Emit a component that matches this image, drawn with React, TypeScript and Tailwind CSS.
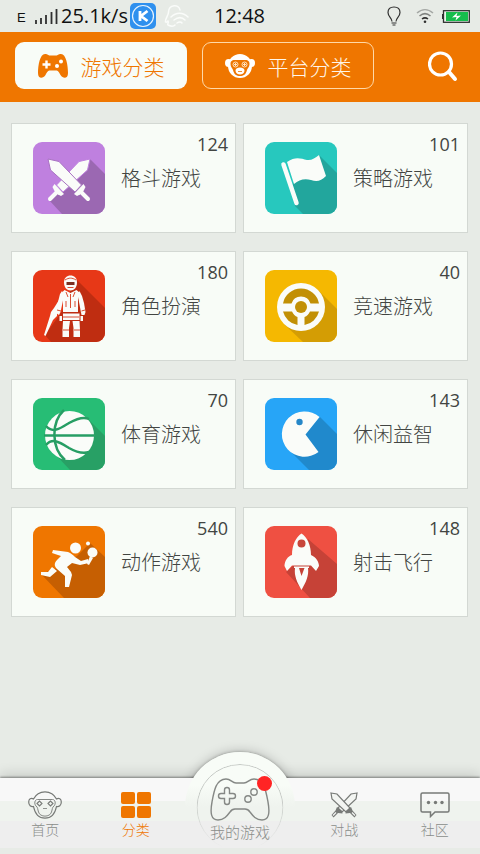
import type { ReactNode } from "react";

const hanzi = "font-['Noto_Sans_CJK_SC',sans-serif] font-light";

/* ---------- category artwork, drawn on a 72 x 72 tile ---------- */

function Sword({ edge }: { edge: string }) {
  return (
    <g>
      <path d="M15 17L26 19.5L48.5 43L42 50L17.5 28Z" fill="#fafcf9" stroke={edge} strokeWidth="1" />
      <path d="M48 50L55 57" stroke="#fafcf9" strokeWidth="4" strokeLinecap="round" />
      <path d="M50.5 42L52.5 45L50.5 49L47 52.5L44 54L41 52Z" fill="#fafcf9" />
    </g>
  );
}

const FightArt = (
  <>
    <path d="M57 17L72 32V72H29L15 57L36 36Z" fill="#9b68b2" />
    <g transform="matrix(-1 0 0 1 72 0)">
      <Sword edge="#bf80df" />
    </g>
    <Sword edge="#a873c2" />
  </>
);

const FlagArt = (
  <>
    <path d="M54 13L72 31V72H38L30 64L28 42Z" fill="#22a69d" />
    <path d="M18.5 22.5L31.5 61" stroke="#fafcf9" strokeWidth="4.5" strokeLinecap="round" />
    <path d="M22 20C31 14 36 17 42 18C47 18.5 50 16 54 13L61 34C56 39 52 40 46 38C39 36 34 38 29 42Z" fill="#fafcf9" />
  </>
);

const SoldierArt = (
  <>
    <path d="M42 8L72 38V72H18L12 65L30 40Z" fill="#bf2d11" />
    <path d="M26 30L21 38L18 42L17 46L11 65L12.5 66L20 50L24 46V42L28 34Z" fill="#fafcf9" />
    <g fill="#fafcf9">
      <path d="M31 12.5C31 8 34 5.5 37.500 5.500S44 8 44 12.500C44 17.500 41 20.500 37.500 20.500S31 17.500 31 12.500Z" />
      <path d="M31.500 20L37.500 23L43.500 20L47 23L45 30V42H30V30L28.500 23Z" />
      <path d="M29 21L31 25L29.500 33L27.500 42L26 45L23 43L24.500 34L27 24Z" />
      <path d="M46.500 21L49 26L51 33L52.500 42L51.500 45L48.500 45L47.500 40L46 32L45 25Z" />
      <path d="M30 43.500H46.500L46.500 50L38.500 50L30 50Z" />
      <path d="M30 51H37L36 58V67H29.500V60Z" />
      <path d="M39.500 51H46.500L47 60V67H40.500V58Z" />
      <path d="M26.500 46H29V51H26.500ZM47.500 46H50V51H47.500Z" />
    </g>
    <g stroke="#d73a1b" fill="none" strokeWidth=".9">
      <path d="M32 10C36 7.500 39 7.500 43 10M34.500 17.500H40.500" />
      <path d="M37.500 24V38M33 22L35 27M42 22L40 27M33 31V37M42 31V37M30 47H46" />
      <path d="M24 40L28 41M48.500 41L52 40M30 60H36M41 60H47" />
    </g>
    <path d="M33.500 12H41.500V15H33.500Z" fill="#7b3022" />
  </>
);

const WheelArt = (
  <>
    <path d="M53 20L72 39V72H38L19 54Z" fill="#d49d04" />
    <circle cx="36" cy="37" r="24" fill="#fafcf9" />
    <path d="M18 33.500A18.300 18.300 0 0 1 54 33.500H45.500A10 10 0 0 0 26.500 33.500Z" fill="#c29005" />
    <path d="M18 41.500H27C28.500 44.500 30 46 32.500 47V55A18.300 18.300 0 0 1 18 41.500Z" fill="#c29005" />
    <path d="M54 41.500H45C43.500 44.500 42 46 39.500 47V55A18.300 18.300 0 0 0 54 41.500Z" fill="#c29005" />
    <circle cx="36" cy="37" r="6" fill="#c29005" />
  </>
);

const BallArt = (
  <>
    <path d="M54 20L72 38V72H37L22 56Z" fill="#28a065" />
    <circle cx="36.500" cy="37.500" r="24.500" fill="#fafcf9" />
    <g fill="none" stroke="#279e64" strokeWidth="2.500">
      <path d="M11 37.500H61" />
      <path d="M31 12C18 24 18 50 32 62" />
      <path d="M13 28C20 36 28 30 36 25C43 21 50 18 56 21" />
      <path d="M13 47C20 39 28 45 36 50C43 54 50 56 56 54" />
    </g>
  </>
);

const PacArt = (
  <>
    <path d="M55 19L72 36V72H44L25 53L40 36Z" fill="#2089cc" />
    <path d="M54.500 19A22.700 22.700 0 1 0 53.500 54L40.500 36.500Z" fill="#fafcf9" />
    <circle cx="34.500" cy="24" r="3.200" fill="#2587c8" />
  </>
);

const RunnerArt = (
  <>
    <path d="M57 17L72 31V72H31L8 48L24 42L44 30Z" fill="#c65f02" />
    <g fill="#fafcf9">
      <circle cx="42.500" cy="22" r="5.500" />
      <circle cx="55" cy="17.500" r="2" />
      <circle cx="59.500" cy="26.500" r="5" />
      <path d="M57 30L60 32L56 39L54 38Z" />
      <path d="M20 24L35 26C38 27 40 29 42 31L48 35L55 33L56 37L47 39L39 37L34 41L38 46L39 49L36 61H32L32 50L24 43C21 40 21 37 24 34L28 30L19 27Z" />
      <path d="M19 41L24 45L17 51L8 49V46L15 46Z" />
    </g>
  </>
);

const RocketArt = (
  <>
    <path d="M43 13L72 38V72H45L21 46L30 38Z" fill="#c64237" />
    <path d="M36.500 7.500C42 11 46 19 46 29C51 31 54 36 54 40L51 45L46 39.500H27L22 45L19.500 40C19.500 35 23 30 27 29C27 19 31 11 36.500 7.500Z" fill="#fafcf9" />
    <path d="M29 41.200H44" stroke="#fafcf9" strokeWidth="1.500" />
    <path d="M30 42H34L36.500 50L39.500 42H43C44 50 41 56 36.500 64C32 56 29 50 30 42Z" fill="#fafcf9" />
    <circle cx="36.500" cy="17.500" r="4" fill="#c8463b" />
  </>
);

type Category = { name: string; count: number; tile: string; art: ReactNode };

const categories: Category[] = [
  { name: "格斗游戏", count: 124, tile: "bg-[#bf80df]", art: FightArt },
  { name: "策略游戏", count: 101, tile: "bg-[#27c8be]", art: FlagArt },
  { name: "角色扮演", count: 180, tile: "bg-[#e73817]", art: SoldierArt },
  { name: "竞速游戏", count: 40, tile: "bg-[#f5b801]", art: WheelArt },
  { name: "体育游戏", count: 70, tile: "bg-[#27bd75]", art: BallArt },
  { name: "休闲益智", count: 143, tile: "bg-[#27a5f7]", art: PacArt },
  { name: "动作游戏", count: 540, tile: "bg-[#ef7600]", art: RunnerArt },
  { name: "射击飞行", count: 148, tile: "bg-[#ef5042]", art: RocketArt },
];

function CategoryCard({ name, count, tile, art }: Category) {
  return (
    <button type="button" className="flex h-[110px] items-center gap-4 border border-[#d3d8d3] bg-[#f8fcf7] pl-[21px] text-left">
      <span className={`size-[72px] shrink-0 overflow-hidden rounded-[9px] ${tile}`}>
        <svg viewBox="0 0 72 72" className="size-full" fill="none" aria-hidden="true">
          {art}
        </svg>
      </span>
      <span className="flex min-w-0 flex-1 flex-col gap-2 self-stretch pt-2">
        <span className="pr-[7px] text-right font-['Open_Sans',sans-serif] text-[18px] leading-6 text-[#424542]">{count}</span>
        <span className={`${hanzi} text-[20px] leading-7 whitespace-nowrap text-[#424542]`}>{name}</span>
      </span>
    </button>
  );
}

/* ---------- status bar ---------- */

function StatusBar() {
  return (
    <div className="flex h-8 items-center bg-[#e7ebe6] font-['Open_Sans',sans-serif] text-[20px] leading-8 text-[#101010]">
      <div className="flex flex-1 items-center pl-[17px]">
        <span className="w-[18px] pt-1 font-['Liberation_Sans',sans-serif] text-[13px]">E</span>
        <svg viewBox="0 0 24 16" className="mr-[2px] h-4 w-6" stroke="#303030" strokeWidth="1.800" aria-hidden="true">
          <path d="M1 16V12M6 16V10M11 16V7M16.500 16V4M21.500 16V1" />
        </svg>
        <span className="w-[69px] whitespace-nowrap">25.1k/s</span>
        <svg viewBox="0 0 26 26" className="size-[26px]" fill="none" aria-hidden="true">
          <rect width="26" height="26" rx="5" fill="#2f90ee" />
          <circle cx="13" cy="13" r="10.500" stroke="#e8f3fd" strokeWidth="1.200" />
          <path d="M10 8V18M17.500 8L11 13L17.500 18" stroke="#fff" strokeWidth="2.800" />
        </svg>
        <svg viewBox="0 0 26 24" className="ml-2 h-6 w-[26px]" fill="none" stroke="#fafcfa" strokeWidth="1.500" strokeLinecap="round" aria-hidden="true">
          <path d="M16 6C15 0 5 0 4.500 8C4.500 12 1 14 1.500 18C3 19 3 17 4 17C5 19 3 20 4 21C8 23 10 22 11 21" />
          <path d="M7 13C12 8 19 8 24 13M10 16C14 13 18 13 21 16M13 19C15 17.500 17 17.500 18 19" />
        </svg>
      </div>
      <span className="pr-2">12:48</span>
      <div className="flex flex-1 items-center justify-end gap-2 pr-[10px]">
        <svg viewBox="0 0 14 20" className="mr-[7px] h-5 w-[14px]" fill="none" stroke="#303030" strokeWidth="1.200" aria-hidden="true">
          <path d="M5 15.500C5 12 1 10.500 1 6.500C1 3 3.500 1 7 1S13 3 13 6.500C13 10.500 9 12 9 15.500M4.500 17H9.500M5.500 19H8.500" />
        </svg>
        <svg viewBox="0 0 18 16" className="h-4 w-[18px]" fill="none" strokeWidth="1.500" aria-hidden="true">
          <path d="M1 5C6 .5 12 .5 17 5" stroke="#a5a8a5" />
          <path d="M3.500 8C7 5 11 5 14.500 8" stroke="#808380" />
          <path d="M6 11C8 9.500 10 9.500 12 11" stroke="#303030" />
          <circle cx="9" cy="13.800" r="1.300" fill="#303030" />
        </svg>
        <svg viewBox="0 0 28 13" className="h-[13px] w-7" aria-hidden="true">
          <rect x="1.500" y=".7" width="25.800" height="11.600" fill="#e9f5ea" stroke="#303030" strokeWidth="1.300" />
          <path d="M0 4H1.500V9H0Z" fill="#303030" />
          <rect x="4" y="2" width="22" height="9" fill="#17bd4c" />
          <path d="M15.500 2.500L10 7.500L14.500 7L13.500 10.500L19 5.500L14.500 6Z" fill="#fff" />
        </svg>
      </div>
    </div>
  );
}

/* ---------- header ---------- */

function PadSolid() {
  return (
    <svg viewBox="0 0 30 24" className="h-6 w-[30px]" aria-hidden="true">
      <path d="M7 0C10 0 10 1.500 12 1.500H18C20 1.500 20 0 23 0C28 0 30 11 30 19C30 25 25 25 22.500 21C20.500 17.500 20 16.500 18 16.500H12C10 16.500 9.500 17.500 7.500 21C5 25 0 25 0 19C0 11 2 0 7 0Z" fill="#ef7600" />
      <path d="M8.500 6.500V14.500M4.500 10.500H12.500" stroke="#fff" strokeWidth="2.400" />
      <circle cx="23" cy="7.500" r="2" fill="#fff" />
      <circle cx="19" cy="12" r="2" fill="#fff" />
    </svg>
  );
}

function MonkeySolid() {
  return (
    <svg viewBox="0 0 30 24" className="h-6 w-[30px]" fill="none" aria-hidden="true">
      <ellipse cx="3.500" cy="9" rx="3.500" ry="4" fill="#fff" />
      <ellipse cx="26.500" cy="9" rx="3.500" ry="4" fill="#fff" />
      <ellipse cx="15" cy="12" rx="12" ry="12" fill="#fff" />
      <path d="M5.500 10C5.500 5.500 9 6 12 6H18C21 6 24.500 5.500 24.500 10C24.500 13 22.500 14 22 16C21 20.500 18.500 22 15 22S9 20.500 8 16C7.500 14 5.500 13 5.500 10Z" fill="#ef7600" />
      <path d="M11.500 14.500C13.500 13 16.500 13 18.500 14.500C20.500 16 19.500 20.500 15 20.500S9.500 16 11.500 14.500Z" fill="#fff" />
      <g stroke="#ffe3c2" strokeWidth="1">
        <circle cx="10.500" cy="10.500" r="2.500" />
        <circle cx="19.500" cy="10.500" r="2.500" />
        <path d="M10.500 9V12M9 10.500H12M19.500 9V12M18 10.500H21" />
      </g>
      <path d="M13 17.500H17" stroke="#ef7600" strokeWidth=".8" />
    </svg>
  );
}

function Header() {
  return (
    <header className="flex h-[70px] items-center bg-[#ef7600] pr-[22px] pb-[5px] pl-[15px]">
      <nav className={`flex gap-[15px] pt-[2px] text-[21px] leading-8 ${hanzi}`}>
        <button type="button" aria-pressed="true" className="flex h-[47px] w-[172px] items-center justify-center gap-[13px] rounded-[9px] bg-[#f8fcf7] whitespace-nowrap text-[#ef7600]">
          <PadSolid />
          游戏分类
        </button>
        <button type="button" aria-pressed="false" className="flex h-[47px] w-[172px] items-center justify-center gap-[13px] rounded-[9px] border border-[#ffd9a8] whitespace-nowrap text-[#fff6ea]">
          <MonkeySolid />
          平台分类
        </button>
      </nav>
      <button type="button" aria-label="搜索" className="ml-auto pt-[3px]">
        <svg viewBox="0 0 30 31" className="h-[31px] w-[30px]" fill="none" stroke="#fff" strokeLinecap="round" aria-hidden="true">
          <circle cx="12.500" cy="13" r="11" strokeWidth="3.200" />
          <path d="M21 21L27 28" strokeWidth="4" />
        </svg>
      </button>
    </header>
  );
}

/* ---------- bottom navigation ---------- */

function MonkeyLine() {
  return (
    <svg viewBox="0 0 34 28" className="h-7 w-[34px]" fill="none" stroke="#777a77" strokeWidth="1.200" aria-hidden="true">
      <path d="M5.500 8C8 3 12 .8 17 .8S26 3 28.500 8C31 6.500 33.300 8 33.300 11C33.300 14.500 31 16 28.500 15.500C27 23 23 27.200 17 27.200S7 23 5.500 15.500C3 16 .7 14.500 .7 11C.7 8 3 6.500 5.500 8Z" />
      <path d="M9.500 8.500H24.500C27.500 8.500 28 13 26 15C24 16.500 24.500 18 23.500 21C22 26.500 12 26.500 10.500 21C9.500 18 10 16.500 8 15C6 13 6.500 8.500 9.500 8.500Z" strokeWidth=".9" />
      <path d="M9 12.500L11.500 10L14 12.500L11.500 15ZM20 12.500L22.500 10L25 12.500L22.500 15Z" strokeWidth="1.100" />
      <path d="M15 17.500H19" strokeWidth=".8" />
    </svg>
  );
}

function GridSolid() {
  return (
    <svg viewBox="0 0 30 26" className="h-[26px] w-[30px]" fill="#ef7600" aria-hidden="true">
      <rect width="14" height="12" rx="2" />
      <rect x="16" width="14" height="12" rx="2" />
      <rect y="14" width="14" height="12" rx="2" />
      <rect x="16" y="14" width="14" height="12" rx="2" />
    </svg>
  );
}

function SwordLine() {
  return (
    <g>
      <path d="M1 1L7 2L20 16L16 20L2 7Z" fill="#f3f5f2" stroke="#777a77" strokeWidth="1.200" />
      <path d="M21 15L22.500 18.500L26.500 23L24.500 25.500L20 21L15.500 21.500L16 19Z" fill="#777a77" />
      <path d="M22 20.500L25 23.500" stroke="#f3f5f2" strokeWidth="1.200" />
    </g>
  );
}

function SwordsLine() {
  return (
    <svg viewBox="0 0 28 27" className="h-[27px] w-7" fill="none" aria-hidden="true">
      <g transform="matrix(-1 0 0 1 28 0)">
        <SwordLine />
      </g>
      <SwordLine />
    </svg>
  );
}

function ChatLine() {
  return (
    <svg viewBox="0 0 30 26" className="h-[26px] w-[30px]" fill="none" stroke="#777a77" strokeWidth="1.500" aria-hidden="true">
      <path d="M2.500 1H27.500Q29 1 29 2.500V18.500Q29 20 27.500 20H15L10.500 24.500V20H2.500Q1 20 1 18.500V2.500Q1 1 2.500 1Z" />
      <g fill="#777a77" stroke="none">
        <circle cx="8.500" cy="10.500" r="1.700" />
        <circle cx="15.500" cy="10.500" r="1.700" />
        <circle cx="22" cy="10.500" r="1.700" />
      </g>
    </svg>
  );
}

function PadLine() {
  return (
    <svg viewBox="0 0 60 44" className="h-11 w-[60px]" fill="none" stroke="#858885" strokeWidth="1.400" aria-hidden="true">
      <path d="M16 1C21 1 22 5 26 5H34C38 5 39 1 44 1C54 1 56 13 58 24C60 35 59 42 52 42C46 42 43 38 40 34C38 31 37 31 35 31H25C23 31 22 31 20 34C17 38 14 42 8 42C1 42 0 35 2 24C4 13 6 1 16 1Z" />
      <path d="M14.500 12Q14.500 9.500 17 9.500T19.500 12V15.500H23Q25.500 15.500 25.500 18T23 20.500H19.500V24Q19.500 26.500 17 26.500T14.500 24V20.500H11Q8.500 20.500 8.500 18T11 15.500H14.500Z" />
      <circle cx="44" cy="14" r="3.200" />
      <circle cx="38" cy="21" r="3.200" />
    </svg>
  );
}

function NavItem({ label, active, children }: { label: string; active?: boolean; children: ReactNode }) {
  return (
    <button type="button" className="flex flex-1 flex-col items-center pt-[13px]">
      <span className="flex h-7 items-center">{children}</span>
      <span className={`${hanzi} text-[14px] leading-5 ${active ? "text-[#ef7600]" : "text-[#8a8d8a]"}`}>{label}</span>
    </button>
  );
}

function BottomNav() {
  return (
    <footer className="sticky bottom-0 mt-auto bg-[#e7ebe6] pb-[6px]">
      <div className="relative">
        {/* raised dome and the shadow it shares with the bar */}
        <div className="absolute -top-[26px] left-1/2 h-[55px] w-[110px] -translate-x-1/2 rounded-t-full shadow-[0_0_3px_rgba(0,0,0,0.3),0_0_12px_rgba(0,0,0,0.25)]" />
        <div className="absolute inset-0 bg-[linear-gradient(#f8f8f8_0_23px,#eff3ee_23px_43px,#eeeeee_43px)] shadow-[0_-1px_2px_rgba(0,0,0,0.4),0_-4px_12px_rgba(0,0,0,0.14)]" />
        <div className="absolute inset-x-0 bottom-[-6px] h-[6px] bg-[#e7ebe6]" />
        <div className="absolute -top-[26px] left-1/2 h-[55px] w-[110px] -translate-x-1/2 rounded-t-full bg-linear-to-b from-[#f8fcf7] from-60% to-[#eff3ee]" />
        <div className="absolute -top-[14px] left-1/2 size-[87px] -translate-x-1/2 rounded-full border border-[#c4c8c4] [mask-image:linear-gradient(#000_40%,transparent_95%)]" />
        <nav className="relative flex h-[70px]">
          <NavItem label="首页">
            <MonkeyLine />
          </NavItem>
          <NavItem label="分类" active>
            <GridSolid />
          </NavItem>
          <button type="button" className="flex w-[118px] flex-col items-center">
            <span className="relative">
              <PadLine />
              <span className="absolute -top-[2px] -right-[2px] size-[15px] rounded-full bg-[#ff2424]" />
            </span>
            <span className={`${hanzi} text-[15px] leading-5 text-[#8a8d8a]`}>我的游戏</span>
          </button>
          <NavItem label="对战">
            <SwordsLine />
          </NavItem>
          <NavItem label="社区">
            <ChatLine />
          </NavItem>
        </nav>
      </div>
    </footer>
  );
}

export default function App() {
  return (
    <div className="flex min-h-screen flex-col bg-[#e7ebe6]">
      <StatusBar />
      <Header />
      <main className="grid grid-cols-2 gap-x-[7px] gap-y-[18px] pt-[21px] pr-3 pb-12 pl-[11px]">
        {categories.map((category) => (
          <CategoryCard key={category.name} {...category} />
        ))}
      </main>
      <BottomNav />
    </div>
  );
}
